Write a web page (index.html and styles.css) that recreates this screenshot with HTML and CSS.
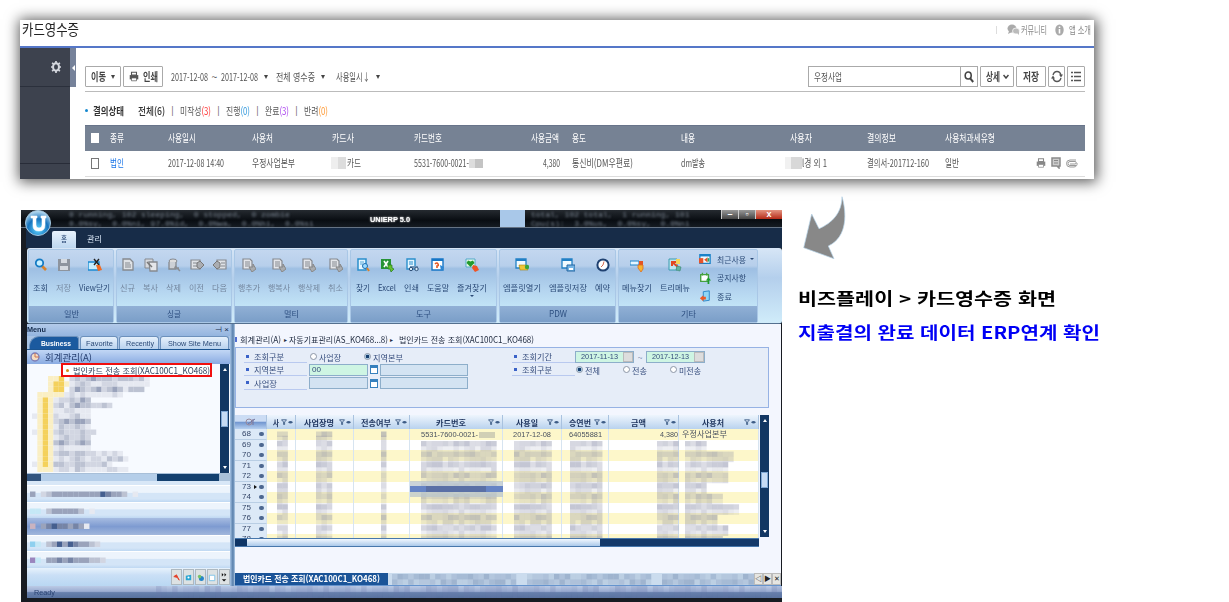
FILE: index.html
```html
<!DOCTYPE html>
<html lang="ko">
<head>
<meta charset="utf-8">
<title>카드영수증</title>
<link rel="stylesheet" href="styles.css">
</head>
<body>
<svg class="defs" width="0" height="0">
  <symbol id="doc" viewBox="0 0 14 14"><path d="M2 1h7l3 3v8H2z" fill="#dfe2e6" stroke="#85898f" stroke-width="1.3"/><path d="M4 5h5M4 7h6M4 9h6" stroke="#85898f"/></symbol>
  <symbol id="docs" viewBox="0 0 14 14"><path d="M1 1h8v9H1z" fill="#d6d9de" stroke="#85898f"/><path d="M5 4h8v9H6z" fill="#e4e6ea" stroke="#85898f" stroke-width="1.3"/><path d="M3 4l5 5" stroke="#777" stroke-width="1.5"/></symbol>
  <symbol id="docdel" viewBox="0 0 14 14"><ellipse cx="6" cy="3" rx="4" ry="2" fill="#ddd" stroke="#85898f"/><path d="M2 4v7h7V4" fill="#ccd0d5" stroke="#85898f" stroke-width="1.3"/><path d="M8 8l5 5M7 10h5" stroke="#8a8d92" stroke-width="1.5"/></symbol>
  <symbol id="next" viewBox="0 0 14 14"><path d="M1 2h9v9H1z" fill="#dfe2e6" stroke="#85898f" stroke-width="1.2"/><path d="M3 5h4M3 8h4" stroke="#85898f"/><path d="M7 5l3-2 4 4-4 4-3-2z" fill="#aaadb2" stroke="#777"/></symbol>
  <symbol id="prev" viewBox="0 0 14 14"><path d="M4 2h9v9H4z" fill="#dfe2e6" stroke="#85898f" stroke-width="1.2"/><path d="M8 5h4M8 8h4" stroke="#85898f"/><path d="M7 5L4 3 0 7l4 4 3-2z" fill="#aaadb2" stroke="#777"/></symbol>
  <symbol id="row" viewBox="0 0 14 14"><path d="M1 1h7l2 2v8H1z" fill="#e4e6ea" stroke="#85898f" stroke-width="1.2"/><path d="M3 4h5M3 6h5M3 8h5" stroke="#85898f"/><path d="M7 9h4V6l3 5-4 3z" fill="#a9acb0" stroke="#888"/></symbol>
  <symbol id="find" viewBox="0 0 14 14"><path d="M8 8l4 4" stroke="#d9822b" stroke-width="2.6"/><circle cx="5.500" cy="5" r="3.700" fill="#c8f0ff" stroke="#157bc4" stroke-width="1.800"/></symbol>
  <symbol id="disk" viewBox="0 0 14 14"><path d="M1 1h12v12H1z" fill="#8d949e"/><path d="M4 1h6v4H4zM3 8h8v4H3z" fill="#d5dae0"/></symbol>
  <symbol id="close" viewBox="0 0 14 14"><path d="M0 4h11v8H0z" fill="#c8efff" stroke="#1b8bd2" stroke-width="1.400"/><path d="M6 1l5 6M11 1L6 7" stroke="#222" stroke-width="1.400"/><path d="M8 7h4l2 5-4 1z" fill="#f06b23"/></symbol>
  <symbol id="bluedoc" viewBox="0 0 14 14"><path d="M2 1h8v11H2z" fill="#e4f6ff" stroke="#2a8fcc" stroke-width="1.500"/><path d="M4 4h4M4 6h3" stroke="#56a8d8"/><circle cx="9" cy="8" r="2.500" fill="#9bdcff" stroke="#1d6db2"/><path d="M11 10l2 3" stroke="#d9822b" stroke-width="2"/></symbol>
  <symbol id="excel" viewBox="0 0 14 14"><path d="M1 1h10v10H1z" fill="#279335"/><path d="M4 3l4 6M8 3L4 9" stroke="#fff" stroke-width="1.600"/><path d="M8 7h4v3l2 1-3 3-1-3H8z" fill="#63c22c" stroke="#26791c" stroke-width=".7"/></symbol>
  <symbol id="print" viewBox="0 0 14 14"><path d="M2 1h8v10H2z" fill="#e4f6ff" stroke="#2a8fcc" stroke-width="1.400"/><path d="M4 4h4M4 6h4" stroke="#2a8fcc"/><path d="M5 8h8v3H5z" fill="#6d94b8"/><circle cx="6" cy="11" r="1.700" fill="#d8ecf8" stroke="#2d4e76"/><circle cx="11.500" cy="11" r="1.700" fill="#d8ecf8" stroke="#2d4e76"/></symbol>
  <symbol id="help" viewBox="0 0 14 14"><path d="M1 1h11v11H1z" fill="#fff" stroke="#1676c6" stroke-width="1.400"/><path d="M1 2h11" stroke="#1676c6" stroke-width="2"/><path d="M4 6q2-2 3 0t-1 2v2" stroke="#e35520" stroke-width="1.600" fill="none"/><path d="M9 7l4 2-3 4z" fill="#2b86d4"/></symbol>
  <symbol id="fav" viewBox="0 0 14 14"><path d="M1 1h9v8H1z" fill="#eafbe8" stroke="#50a9c8"/><path d="M5.500 9L1.500 5l1.500-2.500 2.500 1 2.500-1L9.500 5z" fill="#239a2c"/><path d="M8 7l4 1 2 4-4 2-3-4z" fill="#ee5426"/></symbol>
  <symbol id="tplopen" viewBox="0 0 14 14"><path d="M1 1h10v9H1z" fill="#f2fbff" stroke="#2180c5" stroke-width="1.300"/><path d="M1 2h10" stroke="#2180c5" stroke-width="2"/><path d="M4 7h7l2 5H5z" fill="#efc536" stroke="#a68611" stroke-width=".6"/><circle cx="12" cy="9" r="2.200" fill="#3aa63a"/></symbol>
  <symbol id="tplsave" viewBox="0 0 14 14"><path d="M1 1h10v9H1z" fill="#f2fbff" stroke="#2180c5" stroke-width="1.300"/><path d="M1 2h10" stroke="#2180c5" stroke-width="2"/><path d="M6 7h8v6H6z" fill="#75b5e6" stroke="#2567a1"/><path d="M8 11h4" stroke="#fff" stroke-width="2"/></symbol>
  <symbol id="clock" viewBox="0 0 14 14"><circle cx="7" cy="7" r="5.600" fill="#fff" stroke="#1f4171" stroke-width="2"/><path d="M8 3.500L7 7 5 9" stroke="#d46b50" fill="none"/></symbol>
  <symbol id="menufind" viewBox="0 0 14 14"><path d="M0 3h9v4H0z" fill="#e4f6ff" stroke="#1b82c8"/><path d="M9 3h4v5h-4z" fill="#e35424"/><path d="M8 7h5v4l-2 3-3-4z" fill="#f7b52f" stroke="#dd6c22" stroke-width=".8"/></symbol>
  <symbol id="tree" viewBox="0 0 14 14"><path d="M1 1h8v11H1z" fill="#bfe6f0" stroke="#3b9cae"/><path d="M8 1h4v5H8z" fill="#f6d65b"/><path d="M4 4l6 5M4 8V4h4" stroke="#e34820" stroke-width="2" fill="none"/><path d="M9 8l4 1-1 4-4-1z" fill="#62b4a0" stroke="#39866f" stroke-width=".6"/></symbol>
  <symbol id="recent" viewBox="0 0 14 14"><path d="M1 2h12v10H1z" fill="#effaff" stroke="#1b82c8" stroke-width="1.500"/><path d="M1 3h12" stroke="#1b82c8" stroke-width="2"/><path d="M0 6h5v6H0z" fill="#e8532a"/><path d="M6 8l4-3v6z" fill="#e8532a"/><path d="M10 6h2v4h-2z" fill="#34a35b"/></symbol>
  <symbol id="notice" viewBox="0 0 14 14"><path d="M2 3h9v8H2z" fill="#fff" stroke="#45a13e" stroke-width="1.600"/><path d="M4 1v3M9 1v3" stroke="#45a13e" stroke-width="1.500"/><path d="M11 6l3 4h-2v4h-2v-4H8z" fill="#1f9b2e"/></symbol>
  <symbol id="exit" viewBox="0 0 14 14"><path d="M5 2l7-1v11l-7 1z" fill="#8fd6f5" stroke="#2180c5"/><path d="M8 8H5V6L1 9.500 5 13v-2h3z" fill="#ec5a25"/></symbol>
  <symbol id="printer" viewBox="0 0 14 14"><path d="M3.500 1h7v4h-7z" fill="#fff" stroke="currentColor" stroke-width="1.500"/><path d="M1 5h12v6H1z" fill="currentColor"/><path d="M3.500 9h7v4h-7z" fill="#fff" stroke="currentColor"/></symbol>
  <symbol id="funnel" viewBox="0 0 12 6"><path d="M.5.8h5L3.600 3v2.500h-1V3z" fill="none" stroke="#3d5c86" stroke-width=".9"/><path d="M7 3.300q2.500-2.600 5 0-2.500 2.600-5 0z" fill="#3d5c86"/></symbol>
</svg>

<main class="slide">
  <section class="card">
    <header class="card-head">
      <span class="t brand" data-w="57">카드영수증</span>
      <nav class="links">
        <i class="vbar"></i>
        <svg width="13" height="12" viewBox="0 0 13 12"><ellipse cx="5" cy="4.500" rx="4.500" ry="4" fill="#aaa"/><path d="M2 7l-1 3 4-2z" fill="#aaa"/><ellipse cx="9" cy="7" rx="3.500" ry="3" fill="#bbb" stroke="#fff" stroke-width=".7"/><path d="M10 9l2 2V7z" fill="#bbb"/></svg>
        <span class="t" data-w="26">커뮤니티</span>
        <svg class="info" width="9" height="12" viewBox="0 0 9 12"><ellipse cx="4.500" cy="6" rx="4.200" ry="5.500" fill="#aaa"/><path d="M4.500 2.500v1.600M4.500 5v4.500" stroke="#fff" stroke-width="1.600"/></svg>
        <span class="t" data-w="22">앱 소개</span>
      </nav>
    </header>
    <div class="card-body">
      <aside class="side"><div class="gearbox"><svg width="10" height="12" viewBox="0 0 10 12"><ellipse cx="5" cy="6" rx="3" ry="3.700" fill="none" stroke="#d5d8df" stroke-width="2"/><path d="M5 0v2M5 10v2M0 6h1.500M8.500 6H10M1.200 1.800l1.300 1.500M8.800 1.800L7.500 3.300M1.200 10.200l1.300-1.500M8.800 10.200L7.500 8.700" stroke="#d5d8df" stroke-width="1.700"/></svg></div><div class="navblank"></div><div></div></aside>
      <div class="handle"><svg width="3" height="6" viewBox="0 0 3 6"><path d="M3 0v6L0 3z" fill="#fff"/></svg></div>
      <div class="content">
        <div class="tools">
          <button class="w36"><span class="t" data-w="15">이동</span><i class="dn"></i></button>
          <button class="w40"><svg class="dark" width="10" height="11"><use href="#printer"/></svg><span class="t" data-w="15">인쇄</span></button>
          <div class="dates"><span class="t" data-w="37">2017-12-08</span><span class="tilde">~</span><span class="t" data-w="37">2017-12-08</span><i class="dn"></i></div>
          <div class="sel s1"><span class="t" data-w="39">전체 영수증</span><i class="dn"></i></div>
          <div class="sel s2"><span class="t" data-w="34">사용일시↓</span><i class="dn"></i></div>
          <div class="search"><div class="query"><span class="t" data-w="28">우정사업</span></div><div class="go"><svg width="10" height="12" viewBox="0 0 10 12"><ellipse cx="4.200" cy="4.500" rx="3" ry="3.500" fill="none" stroke="#444" stroke-width="1.600"/><path d="M6.200 7.300L9.200 11" stroke="#444" stroke-width="2"/></svg></div></div>
          <button class="w34"><span class="t" data-w="14">상세</span><svg width="6" height="5" viewBox="0 0 6 5"><path d="M.5 1L3 4l2.500-3" fill="none" stroke="#444" stroke-width="1.500"/></svg></button>
          <button class="w30"><span class="t" data-w="16">저장</span></button>
          <button class="w18 sync"><svg width="12" height="13" viewBox="0 0 12 13"><path d="M2 5q1-3.500 4-3.500T10 5M10 8q-1 3.500-4 3.500T2 8" fill="none" stroke="#555" stroke-width="1.300"/><path d="M0 8.500h4L2 5.500zM8 4.500h4l-2 3z" fill="#555"/></svg></button>
          <button class="w18"><svg width="10" height="11" viewBox="0 0 10 11"><path d="M0 1.500h2M3 1.500h7M0 5.500h2M3 5.500h7M0 9.500h2M3 9.500h7" stroke="#555" stroke-width="1.300"/></svg></button>
        </div>
        <div class="filter"><i class="dot"></i><b class="t" data-w="31">결의상태</b><span class="all t" data-w="27">전체(6)</span><i>|</i><span class="t" data-w="31">미작성<em class="red">(3)</em></span><i>|</i><span class="t" data-w="24">진행<em class="sky">(0)</em></span><i>|</i><span class="t" data-w="24">완료<em class="vio">(3)</em></span><i>|</i><span class="t" data-w="24">반려<em class="org">(0)</em></span></div>
        <div class="tr th">
          <div><i class="cb"></i></div><div><span class="t" data-w="14">종류</span></div><div><span class="t" data-w="28">사용일시</span></div><div><span class="t" data-w="21">사용처</span></div><div><span class="t" data-w="22">카드사</span></div><div><span class="t" data-w="28">카드번호</span></div><div><span class="t" data-w="28">사용금액</span></div><div><span class="t" data-w="14">용도</span></div><div><span class="t" data-w="14">내용</span></div><div><span class="t" data-w="22">사용자</span></div><div><span class="t" data-w="29">결의정보</span></div><div><span class="t" data-w="50">사용처과세유형</span></div><div></div>
        </div>
        <div class="tr td">
          <div><i class="cb"></i></div><div><span class="t link" data-w="14">법인</span></div><div><span class="t" data-w="56">2017-12-08 14:40</span></div><div><span class="t" data-w="43">우정사업본부</span></div><div><i class="mask m1"></i><span class="t" data-w="14">카드</span></div><div><span class="t" data-w="55">5531-7600-0021-</span><i class="mask m2"></i></div><div class="amt"><span class="t" data-w="17">4,380</span></div><div><span class="t" data-w="61">통신비(DM우편료)</span></div><div><span class="t" data-w="24">dm발송</span></div><div class="who"><i class="mask m3"></i><span class="t" data-w="25">l경 외 1</span></div><div><span class="t" data-w="62">결의서-201712-160</span></div><div><span class="t" data-w="14">일반</span></div>
          <div class="acts"><svg width="10" height="12"><use href="#printer"/></svg><svg width="10" height="12" viewBox="0 0 10 12"><path d="M1 1h8v8H8v2L6 9H1z" fill="#ccc" stroke="#8a8a8a" stroke-width="1.500"/><path d="M3 3.500h4M3 6h4" stroke="#888"/></svg><svg width="12" height="9" viewBox="0 0 12 9"><path d="M10 6.500H4a2 2 0 010-4h5a1 1 0 010 2.500H4M10 1H4a3.500 3.500 0 000 7h4a3.500 3.500 0 003-4" fill="none" stroke="#999" stroke-width="1"/></svg></div>
        </div>
      </div>
    </div>
  </section>

  <div class="lower">
    <section class="erp">
      <div class="title">
        <div class="haze"><p>0 running, 102 sleeping,&nbsp; 0 stopped,&nbsp; 0 zombie</p><p>0.0%sy,&nbsp; 0.0%ni, 97.0%id,&nbsp; 0.0%wa,&nbsp; 0.0%hi,&nbsp; 0.0%si</p></div>
        <b class="t" data-w="40">UNIERP 5.0</b>
        <i class="glass"></i>
        <div class="haze h2"><p>total, 102 total,&nbsp; 1 running, 101</p><p>Cpu(s):&nbsp; 3.0%us,&nbsp; 0.0%sy,&nbsp; 0.0%ni</p></div>
        <div class="winbtns"><i>–</i><i>▫</i><i class="x">x</i></div>
      </div>
      <div class="tabs"><div class="orb"><svg width="28" height="28" viewBox="0 0 28 28"><defs><radialGradient id="og" cx=".5" cy=".75" r=".75"><stop offset="0" stop-color="#5fd4ff"/><stop offset=".55" stop-color="#1673bd"/><stop offset="1" stop-color="#c7e4f4"/></radialGradient></defs><circle cx="14" cy="14" r="12.500" fill="url(#og)" stroke="#a3c6de"/><path d="M7 7h6v2h-1v7q0 3 3 3t3-3V9h-1V7h5v2h-1v7q0 6-6 6t-6-5V9H7z" fill="#fff" stroke="#fff" stroke-width=".6"/></svg></div><div class="tab on"><span class="t" data-w="6">홈</span></div><div class="tab"><span class="t" data-w="15">관리</span></div></div>
      <div class="ribbon" id="ribbon"></div>
      <div class="work">
        <div class="left">
          <div class="mtitle"><b class="t" data-w="19">Menu</b><span>⊣ ×</span></div>
          <div class="mtabs"><div class="a"><b class="t" data-w="30">Business</b></div><div class="b"><span class="t" data-w="27">Favorite</span></div><div class="c"><span class="t" data-w="28">Recently</span></div><div class="d"><span class="t" data-w="53">Show Site Menu</span></div></div>
          <div class="mhead"><svg width="10" height="10" viewBox="0 0 10 10"><circle cx="5" cy="5" r="4" fill="#f3dcc4" stroke="#7c7eb8" stroke-width="1.400"/><path d="M5 1v4h4" stroke="#ce7550" fill="none"/></svg><span class="t" data-w="47">회계관리(A)</span></div>
          <div class="tree">
            <div class="treebody"><div class="node"><i></i><span class="t" data-w="137">법인카드 전송 조회(XAC100C1_KO468)</span></div><svg class="mosaic" id="treeMosaic" width="190" height="96"></svg></div>
            <div class="vs"><i class="up"></i><i class="thumb"></i><i class="down"></i></div>
          </div>
          <div class="hs"><i></i><b></b><u></u></div>
          <div class="list" id="list"></div>
          <div class="lfoot"><i><svg viewBox="0 0 10 10"><path d="M2 4l3-2 3 6-2-3z" fill="#e33f28" stroke="#e33f28"/></svg></i><i><svg viewBox="0 0 10 10"><path d="M2 3l6-1v6H2z" fill="#2ba6d3"/><circle cx="5" cy="5" r="1.200" fill="#fff"/></svg></i><i><svg viewBox="0 0 10 10"><circle cx="6" cy="6" r="2.800" fill="#2585c8"/><circle cx="4" cy="4" r="2" fill="#78c26b"/></svg></i><i><svg viewBox="0 0 10 10"><path d="M1.500 2.500h6v6h-6z" fill="#fff" stroke="#79c1e7"/></svg></i><i><svg viewBox="0 0 10 10"><path d="M2 0l2 2-2 2zM5 0l2 2-2 2zM2 7h5L4.500 9.500z" fill="#111"/></svg></i></div>
        </div>
        <div class="split"></div>
        <div class="right">
          <div class="crumb"><i></i><span class="t" data-w="41">회계관리(A)</span><small>▸</small><span class="t" data-w="99">자동기표관리(AS_KO468...8)</span><small class="s">▸</small><span class="t" data-w="135">법인카드 전송 조회(XAC100C1_KO468)</span></div>
          <div class="form">
            <div class="fcol">
              <div class="fr"><label><span class="t" data-w="30">조회구분</span></label><i class="rd"></i><span class="t" data-w="22">사업장</span><i class="rd on g1"></i><span class="t" data-w="30">지역본부</span></div>
              <div class="fr"><label><span class="t" data-w="30">지역본부</span></label><div class="inp green"><span class="t" data-w="9">00</span></div><i class="pick"></i><div class="inp wide"></div></div>
              <div class="fr"><label><span class="t" data-w="23">사업장</span></label><div class="inp"></div><i class="pick"></i><div class="inp wide"></div></div>
            </div>
            <div class="fcol two">
              <div class="fr"><label><span class="t" data-w="30">조회기간</span></label><div class="inp green date"><span class="t" data-w="37">2017-11-13</span><i class="spin"></i></div><span class="tl">~</span><div class="inp green date"><span class="t" data-w="37">2017-12-13</span><i class="spin"></i></div></div>
              <div class="fr"><label><span class="t" data-w="30">조회구분</span></label><i class="rd on"></i><span class="t" data-w="15">전체</span><i class="rd g2"></i><span class="t" data-w="15">전송</span><i class="rd g2"></i><span class="t" data-w="22">미전송</span></div>
            </div>
          </div>
          <div class="gridwrap">
            <div class="grid" id="grid"></div>
            <div class="vs gv"><i class="up"></i><i class="thumb"></i><i class="down"></i></div>
          </div>
          <div class="gh"><i></i><b></b><u></u></div>
          <div class="btabs"><div class="cur"><b class="t" data-w="137">법인카드 전송 조회(XAC100C1_KO468)</b></div><svg id="tabMosaic" width="366" height="12"></svg><div class="nav"><i>◁</i><i>▶</i><i>✕</i></div></div>
        </div>
      </div>
      <div class="status"><span class="t" data-w="21">Ready</span><svg id="statusMosaic" width="626" height="12"></svg></div>
    </section>
    <section class="notes">
      <svg class="arrow" width="50" height="66" viewBox="800 195 50 66"><path d="M842 196.700C846.500 212 848 237 828.300 246L834 258.700 803.700 247.700 811.700 214 819 228.700C832 223 842 213 842 196.700z" fill="#888" stroke="#b5d3e8" stroke-width=".7"/></svg>
      <p><span class="t" data-w="258">비즈플레이 &gt; 카드영수증 화면</span></p>
      <p class="blue"><span class="t" data-w="302">지출결의 완료 데이터 ERP연계 확인</span></p>
    </section>
  </div>
</main>
<script src="app.js"></script>
</body>
</html>
```

FILE: app.js
```js
// Ribbon: [caption, width, left padding, caption width, items]; item = [icon, label, label width, muted]
const groups = [
  ['일반', 86, 4, 15, [['find', '조회', 15], ['disk', '저장', 15, 1], ['close', 'View닫기', 31]]],
  ['싱글', 116, 3, 14, [['doc', '신규', 15, 1], ['docs', '복사', 15, 1], ['docdel', '삭제', 15, 1], ['next', '이전', 15, 1], ['prev', '다음', 15, 1]]],
  ['멀티', 114, 3, 15, [['row', '행추가', 22, 1], ['row', '행복사', 22, 1], ['row', '행삭제', 22, 1], ['row', '취소', 15, 1]]],
  ['도구', 147, 5, 15, [['bluedoc', '찾기', 14], ['excel', 'Excel', 18], ['print', '인쇄', 15], ['help', '도움말', 22], ['fav', '즐겨찾기', 30]]],
  ['PDW', 117, 3, 18, [['tplopen', '엠플릿열기', 38], ['tplsave', '엠플릿저장', 38], ['clock', '예약', 15]]],
  ['기타', 140, 3, 15, [['menufind', '메뉴찾기', 30], ['tree', '트리메뉴', 30]]]
];
const small = [['recent', '최근사용', 29], ['notice', '공지사항', 29], ['exit', '종료', 15]];

document.getElementById('ribbon').innerHTML = groups.map(([cap, w, pad, capW, items], g) =>
  `<div class="grp" style="width:${w}px"><div class="items" style="padding-left:${pad}px">` +
  items.map(([ic, label, lw, off]) =>
    `<div class="it${off ? ' off' : ''}" style="width:${lw}px"><svg width="14" height="14"><use href="#${ic}"/></svg><span class="t" data-w="${lw}">${label}</span>${ic === 'fav' ? '<i class="dn"></i>' : ''}</div>`).join('') +
  (g === 5 ? '<div class="smalls">' + small.map(([ic, label, lw]) =>
    `<div><svg width="12" height="12"><use href="#${ic}"/></svg><span class="t" data-w="${lw}">${label}</span>${ic === 'recent' ? '<i class="dn"></i>' : ''}</div>`).join('') + '</div>' : '') +
  `</div><div class="cap"><span class="t" data-w="${capW}">${cap}</span></div></div>`).join('');

// Pixelated areas: each character of a row selects a tone
const tones = { 1: '#e6e9f1', 2: '#d2d6e2', 3: '#bcc2d2', 4: '#9aa3bb', 5: '#7684a5', 6: '#455f8f', y: '#faefc4', Y: '#f4d15c', b: '#8fd0ef', p: '#9a85bd', r: '#c9b3c0', c: '#c5e8f6' };
function mosaic(rows, size, x0 = 0, y0 = 0) {
  let out = '';
  rows.forEach((r, j) => [...r].forEach((ch, i) => {
    if (tones[ch]) out += `<rect x="${x0 + i * size}" y="${y0 + j * size}" width="${size + .05}" height="${size + .05}" fill="${tones[ch]}"/>`;
  }));
  return out;
}
document.getElementById('treeMosaic').innerHTML = mosaic([
  '...yyY.232343332333231', '...yYYy123211222111111', '...yYY.24323423431333', '.yyyyy12121111121',
  '.yYy1223243', '.yYy23134332232', '.yYy1122111', '1yYy2112311', '.yYy2343443', '.yYy1322321',
  '1yYy23222322', '.yYy1232232', '.yYy3432343', '.yYy1211111', '.yYy2332332212121', '.yYy12123212213231', '1yYy33223322231', '.yyy12213211112211'
], 5.35, 5);
const lists = ['4.2344444444465443.1', 'cc.3444443.1', 'r.456554541', 'bc.3464654432', 'pc.44545444332'];
document.getElementById('list').innerHTML = lists.map((r, i) =>
  `<div class="${i === 2 ? 'on' : ''}"><svg width="190" height="16">${mosaic([r], 5.4, 3, 5.5)}</svg></div>`).join('');

const noise = (i, j) => (i * 7 + j * 11 + ((i * i * 3 + j * j * 5) % 7)) % 5;
document.getElementById('tabMosaic').innerHTML = [0, 1].map(j =>
  Array.from({ length: 68 }, (_, i) => i % 25 > 22 ? '' : `<rect x="${4 + i * 5.4}" y="${1 + j * 5.4}" width="5.450" height="5.450" fill="#8299bb" opacity="${.2 + noise(i, j + 1) * .1}"/>`).join('')).join('');
document.getElementById('statusMosaic').innerHTML =
  Array.from({ length: 117 }, (_, i) => `<rect x="${i * 5.4}" width="5.400" height="12" fill="#6678a8" opacity="${noise(i, 2) * .07}"/>`).join('');

// Data grid
const cols = [['사', 6], ['사업장명', 30], ['전송여부', 30], ['카드번호', 30], ['사용일', 22], ['승연번', 22], ['금액', 15], ['사용처', 22]];
const first = ['', '', '', ['5531-7600-0021-', 57], ['2017-12-08', 38], ['64055881', 33], ['4,380', 18], ['우정사업본부', 45]];
let html = '<div class="gr gth"><div class="corner"><svg width="12" height="8" viewBox="0 0 12 8"><circle cx="4" cy="4" r="3" fill="none" stroke="#98899b"/><path d="M3 6l7-5M8 1v6" stroke="#75759e"/></svg></div>' +
  cols.map(([n, w]) => `<div><span class="mid"><b class="t" data-w="${w}">${n}</b></span><svg width="12" height="6"><use href="#funnel"/></svg></div>`).join('') + '</div><div class="gbody">';
for (let n = 68; n <= 78; n++) {
  html += `<div class="gr"><div class="no"><span class="t" data-w="9">${n}</span>${n === 73 ? '<u></u>' : ''}<i></i></div>` +
    first.map(f => `<div>${n === 68 && f ? `<span class="t" data-w="${f[1]}">${f[0]}</span>` : ''}</div>`).join('') + '</div>';
}
const bands = [[42, 2], [81, 3], [146, 1], [186, 14], [279, 7], [335, 6], [422, 4], [450, 5]];
const ends = [4, 4, 9, 8, 8, 4, 7, 10, 6, 8, 7];
let m = '';
for (let j = 0; j < 21; j++) {
  const strong = j % 2 === 0;
  bands.forEach(([x, len], k) => {
    if (j === 0 && k > 2) { if (k === 3) m += '<rect x="244" y="3" width="16" height="6" fill="#a5a79f" opacity=".5"/>'; return; }
    if (j === 1 && k > 2) return;
    const cells = k === 7 ? ends[j >> 1] : len;
    for (let i = 0; i < cells; i++) {
      const o = (strong ? .27 : .13) + noise(i + k, j) * .045;
      m += `<rect x="${x + i * 5.4}" y="${j === 0 ? 2.500 : j * 5.270 + 1.500}" width="5.450" height="5.300" fill="#7d819f" opacity="${o}"/>`;
    }
  });
}
m += '<rect x="175" y="52" width="93" height="16" fill="#b9c6cc" opacity=".75"/><rect x="175" y="57" width="93" height="6" fill="#6684c5"/><rect x="191" y="57" width="60" height="6" fill="#5a70a6"/>';
html += `<svg class="gm" width="524" height="109">${m}</svg></div>`;
document.getElementById('grid').innerHTML = html;

document.querySelectorAll('.t').forEach(el => {
  const exact = el.getBoundingClientRect().width, want = +el.dataset.w;
  el.style.transform = `scaleX(${want / exact})`;
  el.style.marginRight = `${want - exact}px`;
});
```

FILE: styles.css
```css
* { box-sizing: border-box; }
body { margin: 0; background: #fff; font-family: "Noto Sans CJK KR", "Liberation Sans", sans-serif; color: #555; }
p { margin: 0; }
i, em { font-style: normal; }
svg { display: block; flex: none; }
.defs { position: absolute; }
.slide { width: 1229px; height: 602px; overflow: hidden; padding: 20px 0 0 20px; }
.t { display: inline-block; flex: none; white-space: nowrap; transform-origin: 0 50%; }
.dn { display: block; flex: none; border: 2.5px solid transparent; border-top: 4px solid #444; border-bottom: 0; }

/* Receipt card */
.card { width: 1074px; height: 159px; background: #fff; box-shadow: 1px 1px 13px 2px rgba(0,0,0,.66); }
.card-head { height: 28px; border-bottom: 2px solid #5577c8; display: flex; justify-content: space-between; padding: 0 3px 0 2px; }
.brand { font-size: 15px; line-height: 17px; color: #222; }
.links { display: flex; align-items: center; height: 19px; font-size: 10px; line-height: 12px; color: #888; }
.links .vbar { width: 1px; height: 8px; background: #ddd; margin-right: 10px; }
.links svg + .t { margin-left: 1px; }
.links .info { margin: 0 4px 0 8px; }
.card-body { display: flex; height: 131px; }
.side { width: 50px; background: #3d424e; }
.gearbox { height: 39px; border-bottom: 1px solid #2b303c; padding: 13px 0 0 31px; }
.navblank { height: 77px; border-bottom: 1px solid #282c38; }
.handle { width: 6px; height: 39px; background: #76829a; display: flex; align-items: center; justify-content: center; }
.content { width: 1000px; margin-left: 9px; padding-top: 18px; }
.tools { height: 26px; border-bottom: 1px solid #bbb; display: flex; align-items: flex-start; font-size: 10.5px; line-height: 19px; }
.tools button { font: 700 11px/19px "Noto Sans CJK KR", sans-serif; color: #444; height: 21px; padding: 0; background: #fff; border: 1px solid #aaa; border-radius: 1px; display: flex; align-items: center; justify-content: center; gap: 4px; flex: none; }
.tools .w36 { width: 36px; margin-right: 2px; gap: 5px; }
.tools .w40 { width: 40px; }
.tools .w34 { width: 34px; margin: 0 2px; gap: 3px; }
.tools .w30 { width: 30px; }
.tools .w18 { width: 18px; margin-left: 2px; }
.tools .sync { width: 17px; }
.dark { color: #555; }
.dates, .sel { display: flex; align-items: center; height: 21px; }
.dates { margin-left: 8px; }
.tilde { width: 13px; text-align: center; }
.dates .dn, .sel .dn { margin-left: 6px; }
.s1 { margin-left: 8px; }
.s2 { margin-left: 11px; }
.search { margin-left: auto; width: 170px; height: 21px; border: 1px solid #aaa; display: flex; }
.query { flex: 1; padding-left: 5px; }
.go { width: 17px; border-left: 1px solid #aaa; display: grid; place-items: center; }
.filter { height: 33px; padding-top: 4px; display: flex; align-items: center; font-size: 10.5px; line-height: 14px; }
.filter .dot { width: 3px; height: 3px; border-radius: 2px; background: #1488cf; margin: 0 5px 0 0; }
.filter b { color: #333; }
.filter .all { margin-left: 14px; color: #333; font-weight: 500; }
.filter > i:not(.dot) { width: 15px; text-align: center; font-size: 9px; }
.red { color: #f33; } .sky { color: #39d; } .vio { color: #a4e; } .org { color: #f93; }
.tr { display: grid; grid-template-columns: 25px 58px 84px 80px 82px 117px 41px 109px 109px 77px 78px 93px 47px; align-items: center; height: 26px; font-size: 10.5px; line-height: 14px; }
.tr > div { display: flex; align-items: center; }
.th { background: #768294; color: #fff; border-top: 1px solid #68748a; padding-bottom: 1px; }
.td { border-bottom: 1px solid #ddd; padding-bottom: 1px; }
.cb { width: 8px; height: 10px; background: #fff; margin-left: 6px; }
.td .cb { border: 1px solid #777; height: 11px; }
.link { color: #1b76e8; }
.amt { padding-left: 12px; }
.mask { display: block; height: 12px; }
.m1 { width: 15px; margin: 0 1px 0 -1px; background: linear-gradient(90deg, #eee 45%, #ddd 45%); }
.m2 { width: 14px; height: 9px; background: linear-gradient(90deg, #ddd 40%, #c4c4c4 40%); }
.m3 { width: 17px; background: linear-gradient(90deg, #f1f1f1 35%, #d8d8d8 35%); }
.who { margin-left: -5px; }
.acts { color: #888; gap: 5px; margin-left: -2px; }

/* ERP window */
.lower { display: flex; margin: 31px 0 0 1px; }
.erp { width: 761px; height: 392px; background: #171b22; color: #2b4a77; font-size: 8.5px; line-height: 11px; position: relative; overflow: hidden; }
.erp .dn { border-width: 2px; border-top: 2.500px solid #2b4a77; border-bottom: 0; }
.title { height: 18px; background: linear-gradient(#252a30, #090d12 60%, #151b22); display: flex; color: #fff; border-bottom: 1px solid #657384; }
.title .haze { width: 320px; padding-left: 48px; overflow: hidden; filter: blur(1.1px); font: 8px/9px "Liberation Mono", monospace; color: #78828e; white-space: pre; }
.title > b { font: 700 8px/19px "Liberation Sans", sans-serif; margin: 0 0 0 29px; text-shadow: 0 0 2px #fff; }
.title .glass { width: 25px; margin-left: 90px; background: #a9c8e9; }
.title .h2 { width: 196px; padding-left: 6px; }
.winbtns { width: 61px; height: 9px; display: flex; font: 700 9px/8px "Liberation Sans", sans-serif; text-align: center; }
.winbtns i { width: 17px; background: linear-gradient(#999, #444); border-left: 1px solid #ccc; }
.winbtns .x { width: 27px; background: linear-gradient(#e39480, #b52b18); }
.tabs { height: 20px; margin-left: 5px; background: #172c48; display: flex; align-items: flex-end; color: #dce9f8; }
.orb { width: 26px; height: 34px; margin-left: -2px; position: relative; z-index: 2; }
.orb svg { margin-top: -5px; }
.tab { height: 17px; padding: 2px 10px; }
.tab.on { margin-left: 2px; width: 24px; padding-left: 9px; margin-right: 1px; background: linear-gradient(#e7f2fc, #bdd7f0); color: #2b4a77; border-radius: 2px 2px 0 0; }
.ribbon { height: 76px; margin-left: 6px; padding: 1px 0 2px 1px; display: flex; gap: 2px; background: linear-gradient(#d7e6f6, #b4cfec 40%, #d0ecfa); border-radius: 3px; border-bottom: 1px solid #54708f; overflow: hidden; }
.grp { height: 74px; flex: none; background: linear-gradient(#c3d7ef, #b7cfeb 22%, #9ebfe3 26%, #b4d4ef 55%, #c1e3f6 77%); border: 1px solid #a9c7e6; border-radius: 2px; }
.items { height: 56px; display: flex; gap: 8px; padding-top: 8px; }
.it { display: flex; flex-direction: column; align-items: center; flex: none; }
.it .t { margin-top: 10px; align-self: flex-start; }
.it > .dn { margin-top: 2px; }
.off { color: #74879f; }
.smalls { margin: -8px 0 0 1px; }
.smalls > div { display: flex; align-items: center; height: 18.500px; gap: 6px; }
.smalls .dn { margin-left: -2px; }
.cap { height: 16px; background: linear-gradient(#91b0d5, #7a9ec8); display: grid; justify-content: center; line-height: 15px; color: #2d4f80; }
.work { display: flex; height: 262px; margin-left: 6px; width: 754px; }
.left { width: 203px; background: #d8e7f7; }
.mtitle { height: 12px; display: flex; justify-content: space-between; padding: 0 1px 0 0; background: linear-gradient(#b3cae9, #94b5df); color: #142b4c; font-family: "Liberation Sans"; font-size: 8px; line-height: 12px; }
.mtabs { height: 14px; display: flex; gap: 1px; padding: 0 1px 0 2px; background: #a8c3e4; font: 8px/13px "Liberation Sans", sans-serif; border-bottom: 1px solid #1b5490; }
.mtabs div { background: linear-gradient(#e6f1fc, #b9d2ee); border-radius: 3px 3px 0 0; border: 1px solid #6d91bc; border-bottom: 0; padding-left: 6px; }
.mtabs .a { width: 50px; background: #1b5a9f; color: #fff; padding-left: 11px; border-radius: 10px 3px 0 0; }
.mtabs .b { width: 38px; padding-left: 5px; } .mtabs .c { width: 41px; padding-left: 6px; } .mtabs .d { width: 69px; padding-left: 7px; }
.mhead { height: 14px; display: flex; align-items: center; gap: 5px; padding-left: 3px; background: linear-gradient(#c2d7f5, #8aabe2); font-size: 9px; color: #233c6d; }
.tree { height: 109px; display: flex; background: #f7faff; }
.treebody { flex: 1; position: relative; }
.node { position: absolute; z-index: 2; left: 34px; top: -1px; width: 151px; height: 14px; border: 2px solid #f00f0f; background: #fff; display: flex; align-items: center; gap: 4px; padding-left: 3px; color: #283b59; line-height: 10px; }
.node i { width: 3px; height: 3px; border-radius: 2px; background: #d88c17; }
.mosaic { margin-top: 12px; }
.vs { width: 9px; background: #123763; display: flex; flex-direction: column; align-items: center; justify-content: space-between; padding: 4px 0; margin-right: 1px; }
.vs .thumb { width: 7px; height: 16px; background: #c6dbf4; border: 1px solid #7fa8d5; }
.vs .up { border: 2px solid transparent; border-bottom: 3px solid #fff; border-top: 0; }
.vs .down { border: 2px solid transparent; border-top: 3px solid #fff; border-bottom: 0; }
.hs { height: 8px; display: flex; background: #a8bfd8; padding-top: 1px; }
.hs i { width: 14px; background: #33557f; }
.hs b { width: 116px; background: #b5cee9; }
.hs u { width: 62px; background: #14406f; }
.list { margin-top: 4px; height: 83px; }
.list div { height: 16.600px; background: linear-gradient(#edf4fc 0 40%, #d4e5f7 45% 80%, #bfd8f2); border-top: 1px solid #fff; }
.list .on { background: linear-gradient(#a7bce1, #7e9bd1 50%, #a1b7dc); border: 0; }
.lfoot { height: 18px; background: linear-gradient(#e7f2fc, #cadff6 40%, #b9d7f2); display: flex; justify-content: flex-end; padding: 1px 0 1px; gap: 1px; }
.lfoot i { width: 11px; background: #dde2e3; border: 1px solid #aeb8bf; display: grid; place-items: center; }
.lfoot svg { width: 9px; height: 9px; }
.split { width: 5px; background: linear-gradient(90deg, #a7c4e5, #557da9 60%, #b4cde8); }
.right { width: 546px; background: #f3f6fe; padding-top: 8px; }
.crumb { height: 15px; display: flex; align-items: center; color: #222d42; font-size: 8.500px; }
.crumb i { width: 2px; height: 5px; background: #526fd0; margin-right: 3px; }
.crumb small { width: 8px; font-size: 6px; text-align: center; }
.crumb .s { width: 11px; text-align: left; padding-left: 2px; }
.form { width: 534px; height: 61px; border: 1px solid #96b2e4; background: #e6edf8; display: flex; padding: 2px 0 0 8px; }
.fcol { width: 268px; flex: none; }
.fcol.two { width: 240px; }
.fr { height: 13.300px; display: flex; align-items: center; line-height: 12px; color: #354c7c; }
.fr label { width: 63px; height: 13px; border-bottom: 1px solid #b9c9ef; display: flex; align-items: center; gap: 5px; padding-left: 2px; margin-right: 2px; }
.fr label::before { content: ""; width: 3px; height: 3px; background: #3a62c8; }
.two .fr label { margin-right: 0; }
.rd { width: 7px; height: 7px; margin: 0 2px 0 1px; border: 1px solid #8c96a6; border-radius: 4px; background: #fff; flex: none; }
.rd.on { background: radial-gradient(#163f70 0 40%, #bddcf1 60%); }
.g1 { margin-left: 23px; } .g2 { margin-left: 23px; }
.inp { width: 59px; height: 12px; border: 1px solid #8daeca; background: #d3e3f2; padding-left: 2px; display: flex; align-items: center; font-size: 8px; line-height: 9px; font-family: "Liberation Sans"; }
.green { background: #cef5e3; }
.wide { width: 88px; }
.pick { width: 8px; height: 9px; margin: 0 2px; border: 1px solid #3680bd; border-top-width: 3px; background: #fff; }
.date { padding-left: 5px; justify-content: space-between; }
.spin { width: 10px; height: 10px; border: 1px solid #bbb; background: linear-gradient(#ddd 45%, #777 45% 55%, #ddd 55%); }
.tl { width: 12px; text-align: center; }
.gridwrap { margin-top: 7px; height: 123px; display: flex; }
.grid { width: 524px; height: 123px; overflow: hidden; }
.gv { width: 9px; margin: 0 0 1px 1px; }
.gv .thumb { margin-top: 8px; }
.gr { display: grid; grid-template-columns: 32px 29px 58px 56px 93px 59px 47px 70px 80px; height: 10.550px; font: 8px/10px "Liberation Sans", "Noto Sans CJK KR", sans-serif; color: #49515f; }
.gr > div { display: flex; align-items: center; justify-content: center; border-right: 1px solid #d7e4f0; }
.gr > div:nth-child(8) { justify-content: flex-end; }
.gr > div:nth-child(9) { justify-content: flex-start; padding-left: 3px; }
.gr > div:nth-child(5) { justify-content: flex-start; padding-left: 11px; }
.gbody { position: relative; }
.gbody .gr { background: #fff; }
.gbody .gr:nth-child(odd) { background: #fdf7ca; }
.gbody .no { background: #dce9f7; border-bottom: 1px solid #b9cee4; justify-content: space-between; padding: 0 2px 0 7px; color: #344668; }
.no i { width: 5px; height: 4px; background: #4c6790; border-radius: 2px; }
.no u { border: 2px solid transparent; border-left: 3px solid #111; border-right: 0; }
.gth { height: 14px; background: linear-gradient(#eef5fd, #b9d2ee); }
.gth > div, .gth > div:nth-child(n+2) { justify-content: space-between; padding: 0 2px 0 3px; color: #20365f; border-color: #a9c2df; }
.gth .corner { justify-content: center; background: linear-gradient(#cbdcf4 45%, #6f94cf 50%, #b6d0f0); }
.gth .mid { flex: 1; display: flex; justify-content: center; font-family: "Noto Sans CJK KR"; line-height: 13px; }
.gm { position: absolute; left: 0; top: 0; }
.gh { height: 9px; width: 524px; display: flex; padding: 1px 0; background: #4777ac; }
.gh i { width: 12px; background: #0f3566; }
.gh b { width: 353px; background: linear-gradient(#f2f8ff, #abc9ea); }
.gh u { flex: 1; background: #14396a; }
.btabs { margin-top: 26px; height: 13px; display: flex; background: #cbdcee; border-bottom: 1px solid #6594ce; }
.cur { width: 153px; padding-left: 8px; background: #1b5498; color: #fff; line-height: 11px; }
.nav { display: flex; width: 27px; font-size: 7px; text-align: center; color: #222; }
.nav i { width: 9px; background: #e5e5e2; border: 1px solid #bbb; line-height: 9px; }
.status { height: 12px; margin-left: 6px; padding-left: 7px; background: linear-gradient(#bbcae5, #9bacd1 45%, #6780ad 55%, #58729f); display: flex; justify-content: space-between; font: 8px/13px "Liberation Sans", sans-serif; color: #2a4372; }

/* Callout */
.notes { padding-left: 16px; font-weight: 700; font-size: 16.500px; line-height: 24px; color: #000; }
.arrow { margin: -15px 0 25px 2px; }
.notes p { height: 33.500px; }
.notes .blue { color: #0000f5; }
```
